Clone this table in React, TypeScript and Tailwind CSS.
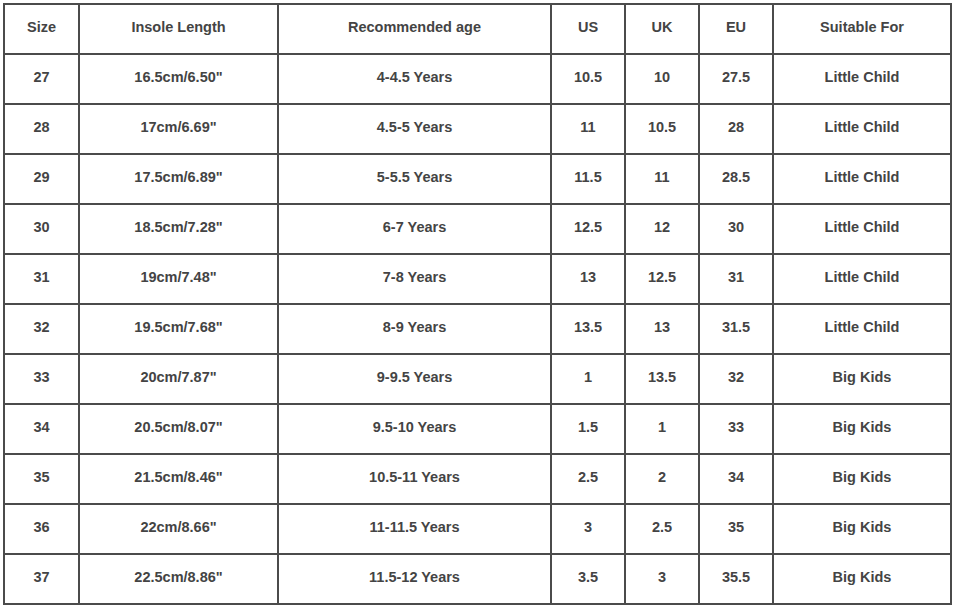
const headers = ['Size', 'Insole Length', 'Recommended age', 'US', 'UK', 'EU', 'Suitable For'];

const rows: string[][] = [
  ['27', '16.5cm/6.50"', '4-4.5 Years', '10.5', '10', '27.5', 'Little Child'],
  ['28', '17cm/6.69"', '4.5-5 Years', '11', '10.5', '28', 'Little Child'],
  ['29', '17.5cm/6.89"', '5-5.5 Years', '11.5', '11', '28.5', 'Little Child'],
  ['30', '18.5cm/7.28"', '6-7 Years', '12.5', '12', '30', 'Little Child'],
  ['31', '19cm/7.48"', '7-8 Years', '13', '12.5', '31', 'Little Child'],
  ['32', '19.5cm/7.68"', '8-9 Years', '13.5', '13', '31.5', 'Little Child'],
  ['33', '20cm/7.87"', '9-9.5 Years', '1', '13.5', '32', 'Big Kids'],
  ['34', '20.5cm/8.07"', '9.5-10 Years', '1.5', '1', '33', 'Big Kids'],
  ['35', '21.5cm/8.46"', '10.5-11 Years', '2.5', '2', '34', 'Big Kids'],
  ['36', '22cm/8.66"', '11-11.5 Years', '3', '2.5', '35', 'Big Kids'],
  ['37', '22.5cm/8.86"', '11.5-12 Years', '3.5', '3', '35.5', 'Big Kids'],
];

export default function App() {
  const all = [headers, ...rows];
  return (
    <div className="w-[956px] h-[607px] bg-white pt-[3px] pl-[3px]" style={{ fontFamily: '"Liberation Sans", Arial, sans-serif' }}>
      <div className="inline-grid grid-cols-[73px_197px_271px_72px_72px_72px_176px] gap-[2px] p-[2px] bg-[#4b4b4b]">
        {all.map((r, i) =>
          r.map((c, j) => (
            <div
              key={`${i}-${j}`}
              className="h-[48px] bg-white flex items-center justify-center pb-[2px] text-[14.5px] font-semibold text-[#444]"
            >
              {c}
            </div>
          ))
        )}
      </div>
    </div>
  );
}
